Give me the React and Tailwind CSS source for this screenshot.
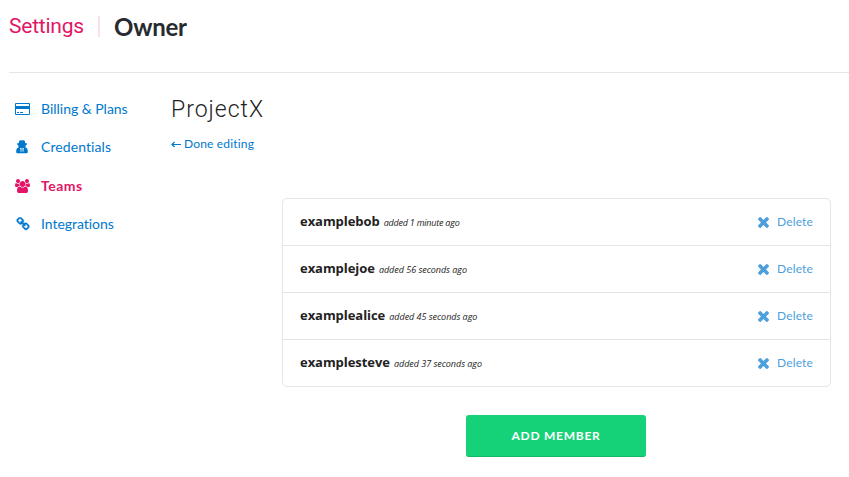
import React from "react";

function CardIcon() {
  return (
    <svg viewBox="0 0 15 12" className="h-3 w-[15px]" fill="currentColor">
      <path fillRule="evenodd" d="M1 0h13a1 1 0 0 1 1 1v10a1 1 0 0 1-1 1H1a1 1 0 0 1-1-1V1a1 1 0 0 1 1-1zM1 1v2h13V1zM1 6v5h13V6z" />
      <path d="M2 9h2v1H2zM5 9h3v1H5z" />
    </svg>
  );
}

function SecretIcon() {
  return (
    <svg viewBox="0 0 12 14" className="mr-[2px] h-[14px] w-3" fill="currentColor">
      <path d="M3.200 1C3.600.200 4.400-.1 6 .600 7.600-.1 8.400.200 8.800 1L9.200 3 11 3.600v.8L9.800 4.900 9.600 6.400l-.3 1.100 1.400.600C11.600 9 11.800 10.300 11.800 12c0 .9-.6 1.300-1.600 1.300H1.800C.8 13.300.200 12.900.200 12c0-1.700.2-3 1.100-3.900L2.700 7.500 2.400 6.400 2.200 4.900 1 4.400v-.8L2.800 3z" />
      <path d="M4 8.300h1.700v1H5.400v2.400h-.8V9.300H4zM6.300 8.300H8v1H7.400v2.400h-.8V9.300h-.3z" fill="#fff" />
    </svg>
  );
}

function UsersIcon() {
  return (
    <svg viewBox="0 0 1920 1792" className="h-[14px] w-[15px]" fill="currentColor">
      <path d="M593 896q-162 5-265 128h-134q-82 0-138-40.500t-56-118.500q0-353 124-353 6 0 43.500 21t97.500 42.500 119 21.500q67 0 133-23-5 37-5 66 0 139 81 256zm1071 637q0 120-73 189.500t-194 69.500h-874q-121 0-194-69.500t-73-189.500q0-53 3.500-103.500t14-109 26.500-108.500 43-97.500 62-81 85.500-53.500 111.500-20q10 0 43 21.500t73 48 107 48 135 21.500 135-21.500 107-48 73-48 43-21.500q61 0 111.500 20t85.500 53.500 62 81 43 97.500 26.500 108.500 14 109 3.500 103.500zm-1024-1277q0 106-75 181t-181 75-181-75-75-181 75-181 181-75 181 75 75 181zm704 384q0 159-112.500 271.500t-271.500 112.500-271.500-112.500-112.500-271.500 112.500-271.500 271.500-112.500 271.500 112.500 112.500 271.500zm576 225q0 78-56 118.500t-138 40.500h-134q-103-123-265-128 81-117 81-256 0-29-5-66 66 23 133 23 59 0 119-21.500t97.500-42.500 43.500-21q124 0 124 353zm-128-609q0 106-75 181t-181 75-181-75-75-181 75-181 181-75 181 75 75 181z" />
    </svg>
  );
}

function LinkIcon() {
  return (
    <svg viewBox="0 0 1792 1792" className="size-[14px]" fill="currentColor" stroke="currentColor" strokeWidth="50">
      <path d="M1520 1216q0-40-28-68l-208-208q-28-28-68-28-42 0-72 32 3 3 19 18.500t21.500 21.500 15 19 13 25.500 3.500 27.500q0 40-28 68t-68 28q-15 0-27.500-3.500t-25.500-13-19-15-21.500-21.500-18.500-19q-33 31-33 73 0 40 28 68l206 207q27 27 68 27 40 0 68-26l147-146q28-28 28-67zm-703-705q0-40-28-68l-206-207q-28-28-68-28-39 0-68 27l-147 146q-28 28-28 67 0 40 28 68l208 208q27 27 68 27 42 0 72-31-3-3-19-18.500t-21.500-21.500-15-19-13-25.500-3.500-27.500q0-40 28-68t68-28q15 0 27.500 3.500t25.500 13 19 15 21.500 21.500 18.500 19q33-31 33-73zm895 705q0 120-85 203l-147 146q-83 83-203 83-121 0-204-85l-206-207q-83-83-83-203 0-123 88-209l-88-88q-86 88-208 88-120 0-204-84l-208-208q-84-84-84-204t85-203l147-146q83-83 203-83 121 0 204 85l206 207q83 83 83 203 0 123-88 209l88 88q86-88 208-88 120 0 204 84l208 208q84 84 84 204z" />
    </svg>
  );
}

function TimesIcon() {
  return (
    <svg viewBox="302 366 1188 1188" className="size-[11px]" fill="currentColor">
      <path d="M1490 1322q0 40-28 68l-136 136q-28 28-68 28t-68-28l-294-294-294 294q-28 28-68 28t-68-28l-136-136q-28-28-28-68t28-68l294-294-294-294q-28-28-28-68t28-68l136-136q28-28 68-28t68 28l294 294 294-294q28-28 68-28t68 28l136 136q28 28 28 68t-28 68l-294 294 294 294q28 28 28 68z" />
    </svg>
  );
}

const NAV = [
  { label: "Billing & Plans", Icon: CardIcon, tone: "text-[#0078ce] tracking-[-0.020px]" },
  { label: "Credentials", Icon: SecretIcon, tone: "text-[#0078ce] tracking-[0.080px]" },
  { label: "Teams", Icon: UsersIcon, tone: "text-[#e31567] font-bold tracking-[0.500px]" },
  { label: "Integrations", Icon: LinkIcon, tone: "text-[#0078ce] tracking-[-0.040px]" },
];

const MEMBERS = [
  { name: "examplebob", added: "added 1 minute ago", fit: "tracking-[-0.230px]" },
  { name: "examplejoe", added: "added 56 seconds ago", fit: "tracking-[-0.030px]" },
  { name: "examplealice", added: "added 45 seconds ago", fit: "tracking-[-0.030px]" },
  { name: "examplesteve", added: "added 37 seconds ago", fit: "tracking-[-0.030px]" },
];

export default function App() {
  return (
    <div className="h-[477px] w-[849px] overflow-hidden bg-white pl-[9px] font-['Lato',sans-serif] whitespace-nowrap text-[#222]">
      <header className="flex h-[73px] items-start border-b border-[#e5e5e5] pt-[14px]">
        <a className="w-[89px] font-['Roboto',sans-serif] text-[21px] leading-6 tracking-[-0.220px] text-[#e31567]">Settings</a>
        <span className="mt-[2px] h-[21px] w-[2px] bg-[#fce0ea]" />
        <h1 className="ml-[14px] pt-[1px] text-[24px] leading-6 font-bold tracking-[-0.250px] text-[#272b2f]">Owner</h1>
      </header>
      <div className="flex">
        <nav className="flex w-[162px] flex-col pt-[17px] pl-[5px]">
          {NAV.map(({ label, Icon, tone }) => (
            <a key={label} className={`flex h-[38.300px] items-center text-[14px] ${tone}`}>
              <span className="flex w-[17px] justify-center">{<Icon />}</span>
              <span className="ml-[10px] -mt-px">{label}</span>
            </a>
          ))}
        </nav>
        <main className="w-[660px] pt-[22px]">
          <h2 className="pt-px font-['Roboto',sans-serif] text-[23px] leading-7 font-light tracking-[1px]">ProjectX</h2>
          <a className="mt-3 flex h-4 items-center text-[12px] text-[#0078ce]">
            <span className="mr-[3px] w-[10px]">
              <svg viewBox="0 0 10 8" className="h-2 w-[10px]" fill="none" stroke="currentColor" strokeWidth="1.200"><path d="M10 4.500H1M3.500 2L1 4.500 3.500 7" /></svg>
            </span>
            <span className="tracking-[0.180px]">Done editing</span>
          </a>
          <ul className="mt-[46px] ml-[111px] w-[549px] divide-y divide-[#e5e5e5] rounded-[5px] border border-[#e5e5e5]">
            {MEMBERS.map((m) => (
              <li key={m.name} className="flex h-[47px] items-center pr-[17px] pl-[17px] last:h-[46px]">
                <strong className="font-['Open_Sans',sans-serif] text-[13px] font-bold tracking-[-0.050px]">{m.name}</strong>
                <em className={`mt-[2px] ml-1 font-['Open_Sans',sans-serif] text-[9px] ${m.fit}`}>{m.added}</em>
                <a className="ml-auto flex items-center text-[12px] text-[#4d9fdc]">
                  <TimesIcon />
                  <span className="ml-2 tracking-[0.150px]">Delete</span>
                </a>
              </li>
            ))}
          </ul>
          <button className="mt-[28px] ml-[295px] block h-[42px] w-[180px] rounded-[3px] border-b border-[#12b866] bg-[#15d278] text-[12px] font-bold tracking-[0.750px] text-white">
            ADD MEMBER
          </button>
        </main>
      </div>
    </div>
  );
}
